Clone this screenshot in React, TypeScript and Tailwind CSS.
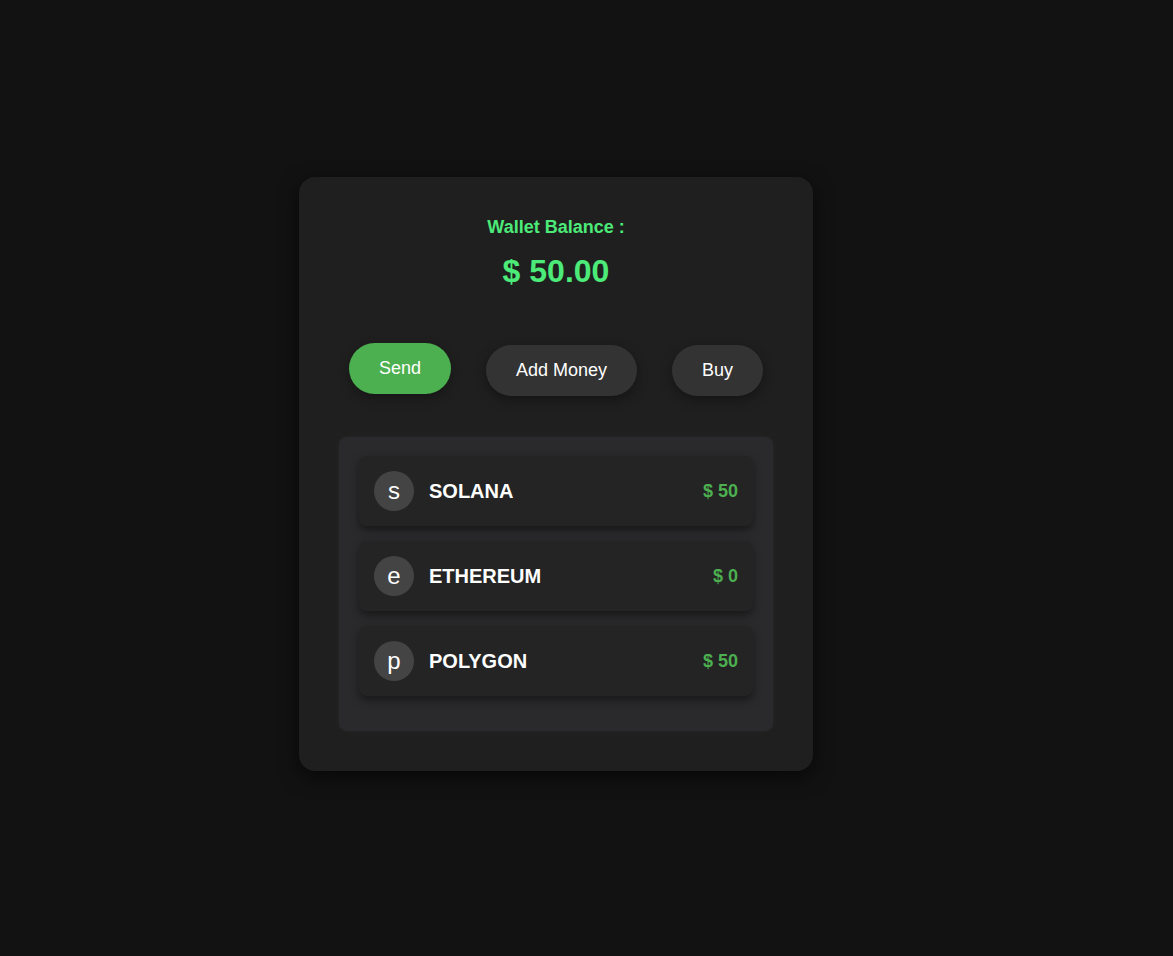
const tokens = [
  { name: "SOLANA", value: 50 },
  { name: "ETHEREUM", value: 0 },
  { name: "POLYGON", value: 50 },
]

function TokenRow({ name, value }: { name: string; value: number }) {
  return (
    <div className="mb-[15px] flex h-[70px] items-center rounded-lg bg-[#242424] px-[15px] shadow-[0_4px_8px_rgba(0,0,0,0.45)]">
      <div className="flex h-10 w-10 items-center justify-center rounded-full bg-[#444444] text-[24px] leading-none text-white">
        {name[0].toLowerCase()}
      </div>
      <span className="ml-[15px] text-[20px] font-bold text-white">{name}</span>
      <span className="ml-auto text-[18px] font-bold text-[#4caf50]">$ {value}</span>
    </div>
  )
}

export default function App() {
  return (
    <div
      className="min-h-[956px] bg-[#121212] pt-[177px] pl-[299px]"
      style={{ fontFamily: '"Liberation Sans", Arial, sans-serif' }}
    >
      <div className="w-[514px] rounded-2xl bg-[#1f1f1f] px-10 pt-10 pb-10 shadow-[0_6px_20px_rgba(0,0,0,0.6)]">
        {/* Balance */}
        <div className="text-center">
          <p className="text-[18px] leading-[21px] font-bold text-[#4cea78]">Wallet Balance :</p>
          <h2 className="mt-[15px] text-[32px] leading-[37px] font-bold text-[#4cea78]">$ 50.00</h2>
        </div>

        {/* Actions */}
        <div className="mt-[55px] flex items-center justify-between px-[10px]">
          <button className="-translate-y-[2px] rounded-full bg-[#4caf50] px-[30px] py-[15px] text-[18px] leading-[21px] text-white shadow-[0_4px_12px_rgba(0,0,0,0.3)]">
            Send
          </button>
          <button className="rounded-full bg-[#333333] px-[30px] py-[15px] text-[18px] leading-[21px] text-white shadow-[0_4px_12px_rgba(0,0,0,0.35)]">
            Add Money
          </button>
          <button className="rounded-full bg-[#333333] px-[30px] py-[15px] text-[18px] leading-[21px] text-white shadow-[0_4px_12px_rgba(0,0,0,0.35)]">
            Buy
          </button>
        </div>

        {/* Tokens */}
        <div className="mt-[41px] rounded-lg bg-[#2a2a2c] px-5 pt-[19px] pb-5 shadow-[0_0_8px_rgba(255,255,255,0.04)]">
          {tokens.map((t) => (
            <TokenRow key={t.name} name={t.name} value={t.value} />
          ))}
        </div>
      </div>
    </div>
  )
}
